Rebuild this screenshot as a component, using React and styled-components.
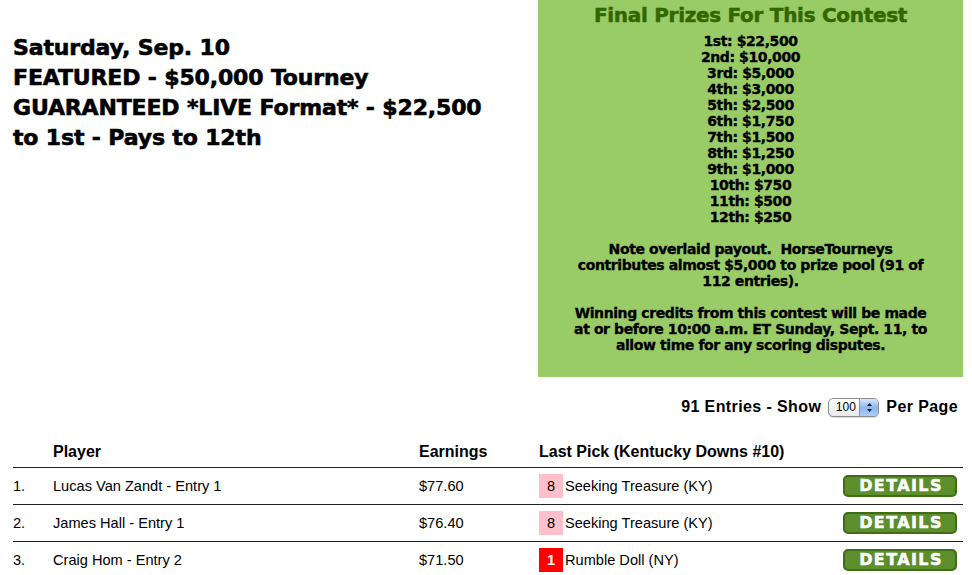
import React from "react";
import styled, { createGlobalStyle } from "styled-components";

const Global = createGlobalStyle`
  html, body { margin: 0; padding: 0; background: #fff; }
  body { font-family: "Liberation Sans", Arial, sans-serif; color: #000; }
`;

const Page = styled.div`
  width: 972px;
  height: 575px;
  overflow: hidden;
  padding: 0 9px 0 13px;
  box-sizing: border-box;
`;

const Top = styled.div`
  display: flex;
  justify-content: space-between;
  align-items: flex-start;
`;

const Heading = styled.h1`
  margin: 0;
  padding-top: 33px;
  font-family: "DejaVu Sans", sans-serif;
  font-weight: bold;
  font-size: 22px;
  line-height: 30px;
  letter-spacing: -0.15px;
  -webkit-text-stroke: 0.6px #000;
`;

const PrizeBox = styled.div`
  width: 425px;
  box-sizing: border-box;
  background: #99cc66;
  padding: 2px 0 24px;
  text-align: center;
  font-family: "DejaVu Sans", sans-serif;
  font-weight: bold;
`;

const PrizeTitle = styled.div`
  color: #336600;
  font-size: 20px;
  line-height: 26px;
  letter-spacing: -0.3px;
  -webkit-text-stroke: 0.5px #336600;
`;

const PrizeText = styled.div`
  margin-top: 5px;
  font-size: 14px;
  line-height: 16px;
  letter-spacing: -0.4px;
  -webkit-text-stroke: 0.35px #000;
`;

const Gap = styled.div`
  height: 16px;
`;

const EntriesBar = styled.div`
  margin-top: 20px;
  padding-right: 5px;
  display: flex;
  justify-content: flex-end;
  align-items: center;
  gap: 7px;
  height: 20px;
  font-weight: bold;
  font-size: 16px;
  letter-spacing: 0.4px;
`;

const FakeSelect = styled.span`
  display: inline-flex;
  width: 51px;
  height: 19px;
  box-sizing: border-box;
  border: 1px solid #8c8c8c;
  border-radius: 5px;
  overflow: hidden;
  background: linear-gradient(#ffffff, #e9e9e9);
  font-weight: normal;
  font-size: 12px;
  letter-spacing: 0;
  box-shadow: 0 1px 1px rgba(0, 0, 0, 0.15);
`;

const SelectValue = styled.span`
  flex: 1;
  display: flex;
  align-items: center;
  justify-content: center;
  padding-left: 3px;
`;

const SelectArrows = styled.span`
  width: 18px;
  border-left: 1px solid #7b95c2;
  background: linear-gradient(#d7e7fb, #8cb7ee 50%, #a9cdf7);
  display: flex;
  align-items: center;
  justify-content: center;
`;

const Table = styled.div`
  margin-top: 20px;
  display: grid;
  grid-template-columns: 40px 366px 120px 304px 120px;
`;

const HeadCell = styled.div`
  height: 30px;
  display: flex;
  align-items: center;
  font-weight: bold;
  font-size: 16px;
  border-bottom: 1px solid #222;
`;

const Cell = styled.div`
  height: 36px;
  display: flex;
  align-items: center;
  font-size: 14.6px;
  border-bottom: 1px solid #222;
  justify-content: ${(p) => (p.$right ? "flex-end" : "flex-start")};
  padding-right: ${(p) => (p.$right ? "6px" : "0")};
`;

const Badge = styled.span`
  width: 24px;
  height: 24px;
  display: inline-flex;
  align-items: center;
  justify-content: center;
  margin-right: 2px;
  background: ${(p) => p.$bg};
  color: ${(p) => p.$fg};
  font-weight: ${(p) => (p.$fg === "#fff" ? "bold" : "normal")};
`;

const DetailsButton = styled.button`
  width: 114px;
  height: 22px;
  box-sizing: border-box;
  border: 2px solid #3e6d16;
  border-radius: 5px;
  background: #5c8e2c;
  color: #fff;
  font-family: "DejaVu Sans", sans-serif;
  font-weight: bold;
  font-size: 16px;
  letter-spacing: 1.4px;
  line-height: 18px;
  padding: 0 0 0 2px;
  -webkit-text-stroke: 0.5px #fff;
  cursor: pointer;
`;

const prizes = [
  "1st: $22,500",
  "2nd: $10,000",
  "3rd: $5,000",
  "4th: $3,000",
  "5th: $2,500",
  "6th: $1,750",
  "7th: $1,500",
  "8th: $1,250",
  "9th: $1,000",
  "10th: $750",
  "11th: $500",
  "12th: $250",
];

const rows = [
  { n: "1.", player: "Lucas Van Zandt - Entry 1", earn: "$77.60", num: "8", horse: "Seeking Treasure (KY)", bg: "#ffc0cb", fg: "#000" },
  { n: "2.", player: "James Hall - Entry 1", earn: "$76.40", num: "8", horse: "Seeking Treasure (KY)", bg: "#ffc0cb", fg: "#000" },
  { n: "3.", player: "Craig Hom - Entry 2", earn: "$71.50", num: "1", horse: "Rumble Doll (NY)", bg: "#ff0000", fg: "#fff" },
];

export default function App() {
  return (
    <>
      <Global />
      <Page>
        <Top>
          <Heading>
            Saturday, Sep. 10
            <br />
            FEATURED - $50,000 Tourney
            <br />
            GUARANTEED *LIVE Format* - $22,500
            <br />
            to 1st - Pays to 12th
          </Heading>
          <PrizeBox>
            <PrizeTitle>Final Prizes For This Contest</PrizeTitle>
            <PrizeText>
              {prizes.map((p) => (
                <div key={p}>{p}</div>
              ))}
              <Gap />
              <div>Note overlaid payout.&nbsp; HorseTourneys</div>
              <div>contributes almost $5,000 to prize pool (91 of</div>
              <div>112 entries).</div>
              <Gap />
              <div>Winning credits from this contest will be made</div>
              <div>at or before 10:00 a.m. ET Sunday, Sept. 11, to</div>
              <div>allow time for any scoring disputes.</div>
            </PrizeText>
          </PrizeBox>
        </Top>
        <EntriesBar>
          <span>91 Entries - Show</span>
          <FakeSelect>
            <SelectValue>100</SelectValue>
            <SelectArrows>
              <svg width="7" height="11" viewBox="0 0 7 11">
                <path d="M3.5 1 L6 4 H1 Z" fill="#1a1a1a" />
                <path d="M3.5 10 L6 7 H1 Z" fill="#1a1a1a" />
              </svg>
            </SelectArrows>
          </FakeSelect>
          <span>Per Page</span>
        </EntriesBar>
        <Table>
          <HeadCell />
          <HeadCell>Player</HeadCell>
          <HeadCell>Earnings</HeadCell>
          <HeadCell>Last Pick (Kentucky Downs #10)</HeadCell>
          <HeadCell />
          {rows.map((r) => (
            <React.Fragment key={r.n}>
              <Cell>{r.n}</Cell>
              <Cell>{r.player}</Cell>
              <Cell>{r.earn}</Cell>
              <Cell>
                <Badge $bg={r.bg} $fg={r.fg}>{r.num}</Badge>
                {r.horse}
              </Cell>
              <Cell $right>
                <DetailsButton>DETAILS</DetailsButton>
              </Cell>
            </React.Fragment>
          ))}
        </Table>
      </Page>
    </>
  );
}
